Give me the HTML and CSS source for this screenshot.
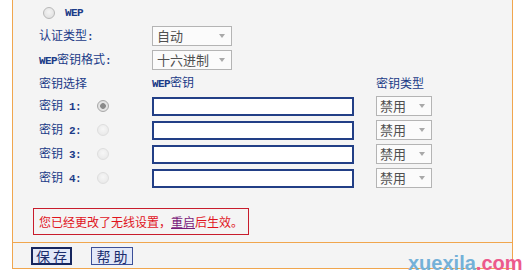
FILE: index.html
```html
<!DOCTYPE html>
<html lang="zh-CN">
<head>
<meta charset="utf-8">
<title>WEP</title>
<link rel="stylesheet" href="styles.css">
</head>
<body>
<div class="panel">
  <div class="main">
    <div class="form">
      <div class="wep"><span class="radio"></span><span class="en">WEP</span></div>

      <div class="lbl">认证类型<span class="en">:</span></div>
      <div class="c2"><div class="sel w80"><span>自动</span><i class="arrow"></i></div></div>
      <div></div>

      <div class="lbl"><span class="en">WEP</span>密钥格式<span class="en">:</span></div>
      <div class="c2"><div class="sel w80"><span>十六进制</span><i class="arrow"></i></div></div>
      <div></div>

      <div class="lbl">密钥选择</div>
      <div class="c2"><span class="en">WEP</span>密钥</div>
      <div class="c3">密钥类型</div>

      <div class="lbl key"><span class="kname">密钥<span class="en"> 1:</span></span><span class="radio on"></span></div>
      <div class="c2"><div class="inp"></div></div>
      <div class="c3"><div class="sel w56"><span>禁用</span><i class="arrow"></i></div></div>

      <div class="lbl key"><span class="kname">密钥<span class="en"> 2:</span></span><span class="radio off"></span></div>
      <div class="c2"><div class="inp"></div></div>
      <div class="c3"><div class="sel w56"><span>禁用</span><i class="arrow"></i></div></div>

      <div class="lbl key"><span class="kname">密钥<span class="en"> 3:</span></span><span class="radio off"></span></div>
      <div class="c2"><div class="inp"></div></div>
      <div class="c3"><div class="sel w56"><span>禁用</span><i class="arrow"></i></div></div>

      <div class="lbl key"><span class="kname">密钥<span class="en"> 4:</span></span><span class="radio off"></span></div>
      <div class="c2"><div class="inp"></div></div>
      <div class="c3"><div class="sel w56"><span>禁用</span><i class="arrow"></i></div></div>
    </div>
    <div class="msg">您已经更改了无线设置，<a class="link">重启</a>后生效。</div>
  </div>
  <div class="btns">
    <span class="btn def">保 存</span>
    <span class="btn">帮 助</span>
  </div>
</div>
<div class="mark"><span class="x">xuexila</span><span class="com">.com</span></div>
</body>
</html>
```

FILE: styles.css
```css
html, body {
  margin: 0;
  padding: 0;
  background: #ffffff;
}
body {
  font-family: "Noto Sans CJK SC", sans-serif;
  font-size: 12px;
  color: #1b3b88;
  position: relative;
  width: 530px;
  height: 276px;
  overflow: hidden;
}
.en {
  font-family: "Liberation Mono", monospace;
  font-size: 11px;
  letter-spacing: -0.6px;
  font-weight: bold;
  white-space: pre;
}
.panel {
  margin-left: 12px;
  width: 499px;
  border-left: 1px solid #f0a64e;
  border-right: 1px solid #f0a64e;
  border-bottom: 1px solid #f0a64e;
  background: #f4f4f4;
}
.main {
  border-bottom: 1px solid #f0a64e;
  padding: 2px 0 7px 0;
}
.form {
  display: grid;
  grid-template-columns: 113px 224px 1fr;
  grid-template-rows: 22px 24px 24px 22px 24px 24px 24px 24px;
  align-items: center;
  padding-left: 26px;
  line-height: 16px;
}
.wep {
  grid-column: 1 / -1;
  display: flex;
  align-items: center;
  padding-left: 4px;
}
.wep .radio {
  margin-right: 10px;
}
.lbl {
  white-space: nowrap;
}
.key {
  display: flex;
  align-items: center;
}
.kname {
  width: 58px;
}
.radio {
  display: inline-block;
  box-sizing: border-box;
  width: 12px;
  height: 12px;
  border-radius: 50%;
  border: 1px solid #b8b8b8;
  background: radial-gradient(circle at 50% 40%, #f4f4f4 0%, #dcdcdc 100%);
}
.radio.on {
  border-color: #a8a8a8;
  background: radial-gradient(circle, #8a8a8a 0, #8a8a8a 2.5px, #e6e6e6 3.2px, #d8d8d8 100%);
}
.radio.off {
  border-color: #dedede;
  background: radial-gradient(circle at 50% 40%, #f6f6f6 0%, #e6e6e6 100%);
}
.sel {
  box-sizing: border-box;
  height: 20px;
  border: 1px solid #b4b4b4;
  background: #fbfbfb;
  color: #505050;
  font-size: 13px;
  display: flex;
  align-items: center;
  justify-content: space-between;
  padding: 0 6px 0 4px;
}
.w80 { width: 80px; }
.w56 { width: 56px; padding-left: 3px; }
.arrow {
  width: 0;
  height: 0;
  border-left: 3px solid transparent;
  border-right: 3px solid transparent;
  border-top: 4px solid #a9a9a9;
}
.inp {
  box-sizing: border-box;
  width: 202px;
  height: 19px;
  border: 2px solid #223f86;
  background: #ffffff;
}
.msg {
  box-sizing: border-box;
  margin: 18px 0 0 20px;
  width: 216px;
  height: 27px;
  border: 1px solid #c81c2c;
  color: #e0141e;
  padding-left: 5px;
  display: flex;
  align-items: center;
  white-space: nowrap;
}
.link {
  color: #7a1a7a;
  text-decoration: underline;
}
.btns {
  height: 25px;
  display: flex;
  align-items: center;
  padding-left: 18px;
  gap: 19px;
}
.btn {
  box-sizing: border-box;
  width: 42px;
  height: 18px;
  display: flex;
  align-items: center;
  justify-content: center;
  background: #e2e8f8;
  border: 1px solid #3b4f98;
  color: #1a2c6e;
  font-size: 14px;
  white-space: pre;
}
.btn.def {
  width: 41px;
  border: 2px solid #16265e;
}
.mark {
  position: absolute;
  left: 408px;
  top: 251px;
  font-family: "Liberation Sans", Arial, sans-serif;
  font-weight: bold;
  font-size: 20px;
  line-height: 24px;
}
.mark .x { color: #74b1d8; }
.mark .com { color: #ec5a8c; }
```
